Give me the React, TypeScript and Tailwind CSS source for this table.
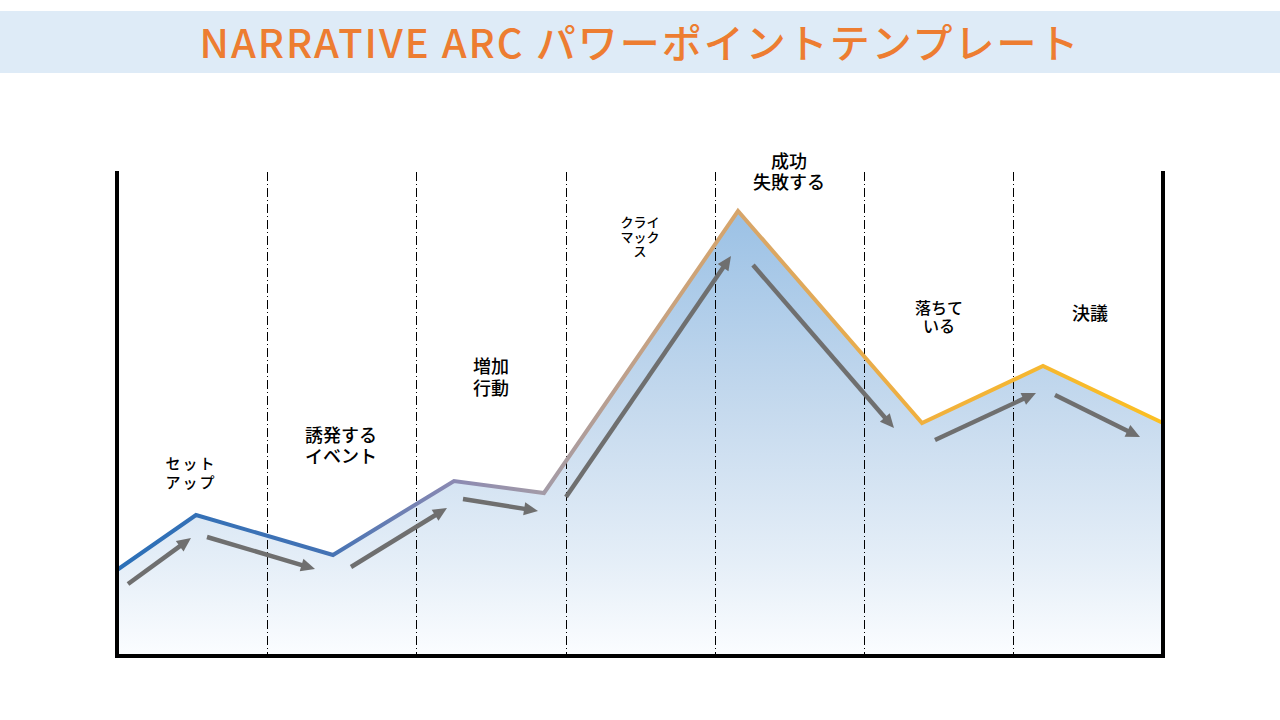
const points: [number, number][] = [
  [117, 570],
  [196, 515],
  [333, 555],
  [454, 481],
  [544, 493],
  [738, 211],
  [922, 423],
  [1043, 366],
  [1163, 423],
];

const arrows: [number, number, number, number][] = [
  [128, 584, 191, 538],
  [207, 537, 315, 569],
  [351, 567, 447, 508],
  [463, 499, 538, 511],
  [566, 497, 731, 256],
  [753, 265, 894, 428],
  [935, 440, 1036, 393],
  [1055, 395, 1140, 437],
];

const dividers = [267, 416, 566, 715, 864, 1013];

const labels = [
  { lines: ["セット", "アップ"], x: 191, top: 381, cls: "text-[15px] leading-[19px] tracking-[2px]" },
  { lines: ["誘発する", "イベント"], x: 341, top: 353, cls: "text-[18px] leading-[21px]" },
  { lines: ["増加", "行動"], x: 491, top: 283, cls: "text-[18px] leading-[22px]" },
  { lines: ["クライ", "マック", "ス"], x: 640, top: 143, cls: "text-[13px] leading-[14.5px]" },
  { lines: ["成功", "失敗する"], x: 789, top: 79, cls: "text-[18px] leading-[21px]" },
  { lines: ["落ちて", "いる"], x: 939, top: 227, cls: "text-[16px] leading-[18px]" },
  { lines: ["決議"], x: 1090, top: 230, cls: "text-[18px] leading-[22px]" },
];

const Arrow = ({ a }: { a: [number, number, number, number] }) => {
  const [x1, y1, x2, y2] = a;
  const len = Math.hypot(x2 - x1, y2 - y1);
  const ux = (x2 - x1) / len;
  const uy = (y2 - y1) / len;
  const head = 14;
  const half = 6.5;
  const bx = x2 - ux * head;
  const by = y2 - uy * head;
  const p1 = `${bx - uy * half},${by + ux * half}`;
  const p2 = `${bx + uy * half},${by - ux * half}`;
  return (
    <g>
      <line x1={x1} y1={y1} x2={bx + ux * 2} y2={by + uy * 2} stroke="#6f6f6f" strokeWidth={4.5} />
      <polygon points={`${x2},${y2} ${p1} ${p2}`} fill="#6f6f6f" />
    </g>
  );
};

export default function App() {
  const line = points.map((p) => p.join(",")).join(" ");
  const area = `${line} 1163,656 117,656`;

  return (
    <div className="w-[1280px] h-[720px] bg-white overflow-hidden font-['Noto_Sans_CJK_JP','Noto_Sans',sans-serif]">
      <div className="mt-[11px] h-[62px] bg-[#deebf7] flex items-center justify-center">
        <h1 className="text-[40px] leading-none font-medium text-[#ed7d31] tracking-[2px] pb-[2px]">
          NARRATIVE ARC パワーポイントテンプレート
        </h1>
      </div>

      <div className="relative h-[647px]">
        <svg className="absolute inset-0" width="1280" height="647" viewBox="0 73 1280 647">
          <defs>
            <linearGradient id="areaFill" gradientUnits="userSpaceOnUse" x1="0" y1="211" x2="0" y2="656">
              <stop offset="0" stopColor="#9bc1e5" />
              <stop offset="0.45" stopColor="#c6daee" />
              <stop offset="0.8" stopColor="#e6eff8" />
              <stop offset="1" stopColor="#fbfdff" />
            </linearGradient>
            <linearGradient id="lineStroke" gradientUnits="userSpaceOnUse" x1="117" y1="0" x2="1163" y2="0">
              <stop offset="0" stopColor="#2b70b8" />
              <stop offset="0.2" stopColor="#4372b4" />
              <stop offset="0.32" stopColor="#8a89b2" />
              <stop offset="0.41" stopColor="#a49ba6" />
              <stop offset="0.5" stopColor="#c2a187" />
              <stop offset="0.59" stopColor="#d6a56c" />
              <stop offset="0.77" stopColor="#f0b03e" />
              <stop offset="1" stopColor="#fbbf22" />
            </linearGradient>
          </defs>

          <polygon points={area} fill="url(#areaFill)" />

          {dividers.map((x) => (
            <line key={x} x1={x + 0.5} y1={172} x2={x + 0.5} y2={654} stroke="#000" strokeWidth={1} strokeDasharray="9 3 1 3" />
          ))}

          <polyline points={line} fill="none" stroke="url(#lineStroke)" strokeWidth={4} strokeLinejoin="miter" />

          {arrows.map((a, i) => (
            <Arrow key={i} a={a} />
          ))}

          <path d="M117 171 V656 H1163 V171" fill="none" stroke="#000" strokeWidth={4} />
        </svg>

        {labels.map((l, i) => (
          <div
            key={i}
            className={`absolute -translate-x-1/2 text-center font-medium text-black whitespace-nowrap font-['Liberation_Sans','Noto_Sans_CJK_JP',sans-serif] ${l.cls}`}
            style={{ left: l.x, top: l.top }}
          >
            {l.lines.map((t) => (
              <div key={t}>{t}</div>
            ))}
          </div>
        ))}
      </div>
    </div>
  );
}
